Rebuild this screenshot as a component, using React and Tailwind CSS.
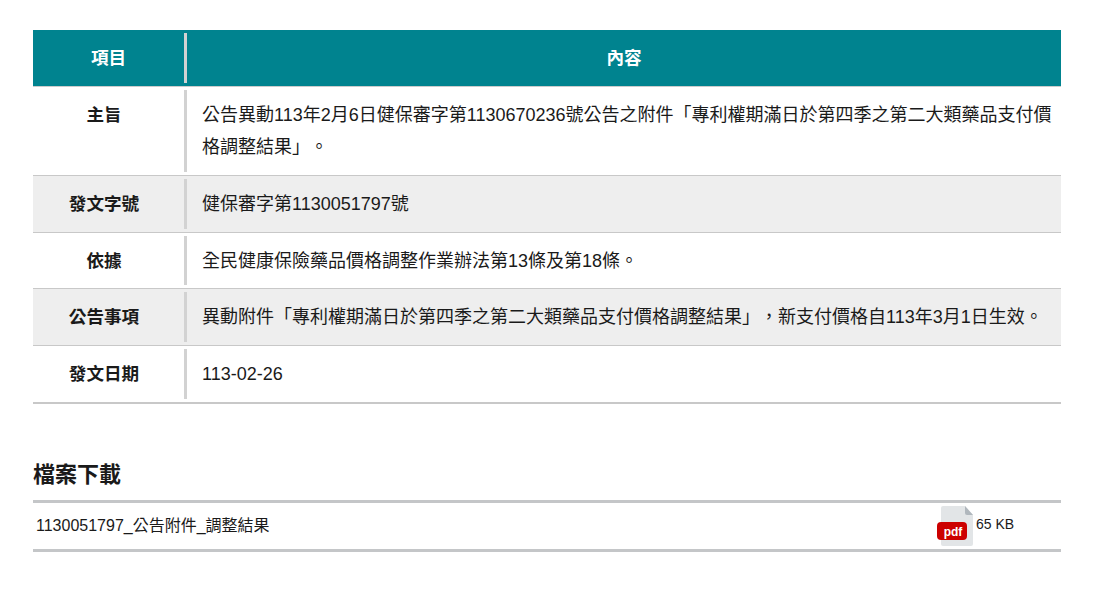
const FONT = "font-['Liberation_Sans','Noto_Sans_CJK_TC',sans-serif]";

const rows = [
  { label: "主旨", value: "公告異動113年2月6日健保審字第1130670236號公告之附件「專利權期滿日於第四季之第二大類藥品支付價格調整結果」。", first: true },
  { label: "發文字號", value: "健保審字第1130051797號", alt: true },
  { label: "依據", value: "全民健康保險藥品價格調整作業辦法第13條及第18條。" },
  { label: "公告事項", value: "異動附件「專利權期滿日於第四季之第二大類藥品支付價格調整結果」，新支付價格自113年3月1日生效。", alt: true },
  { label: "發文日期", value: "113-02-26", last: true },
];

function PdfIcon() {
  return (
    <svg width="36" height="40" viewBox="0 0 36 40" className="shrink-0">
      <path d="M4 2 a2 2 0 0 1 2-2 H28 L36 9 V38 a2 2 0 0 1-2 2 H6 a2 2 0 0 1-2-2 Z" fill="#e2e5e7" />
      <path d="M28 0 L36 9 H30 a2 2 0 0 1-2-2 Z" fill="#b0b7bd" />
      <rect x="0" y="16" width="30" height="18" rx="4" fill="#cc0000" />
      <text x="16" y="29.5" textAnchor="middle" fontSize="12" fontWeight="700" fill="#ffffff" fontFamily="Liberation Sans, sans-serif">pdf</text>
    </svg>
  );
}

export default function App() {
  return (
    <div className={`${FONT} [text-spacing-trim:space-all] bg-white text-[#1a1a1a] min-h-[591px] px-[33px] pt-[30px]`}>
      <div className="w-[1028px]">
        <div className="flex h-[57px] bg-[#00838f] border-b border-[#cccccc] text-white font-bold text-[17.6px]">
          <div className="w-[151px] flex items-center justify-center">項目</div>
          <div className="flex-1 flex items-center justify-center border-l-[3px] border-[#d2d2d2] mt-[3px] mb-[3px]">內容</div>
        </div>
        {rows.map((r) => {
          const cell = r.first ? "pt-[9px] pb-[9px] leading-8" : "pt-[10px] pb-[8px] leading-[31.68px]";
          return (
            <div key={r.label} className={`flex pt-[3px] border-[#c8c8c8] ${r.last ? "border-b-2" : "border-b"} pb-[3px] ${r.alt ? "bg-[#eeeeee]" : "bg-white"}`}>
              <div className={`w-[151px] pr-[9px] text-center font-bold text-[17.6px] ${cell}`}>{r.label}</div>
              <div className={`flex-1 border-l-[3px] border-[#d2d2d2] pl-[15px] pr-[7px] text-[18px] ${cell}`}>{r.value}</div>
            </div>
          );
        })}
        <h2 className="mt-[54px] h-[42px] text-[22px] font-bold leading-[34px]">檔案下載</h2>
        <div className="flex items-center h-[52px] border-y-[3px] border-[#c4c6c8]">
          <div className="w-[904px] pl-[3px] pt-[1px] text-base">1130051797_公告附件_調整結果</div>
          <div className="flex items-center text-sm">
            <PdfIcon />
            <span className="ml-[3px] mb-[3px]">65 KB</span>
          </div>
        </div>
      </div>
    </div>
  );
}
